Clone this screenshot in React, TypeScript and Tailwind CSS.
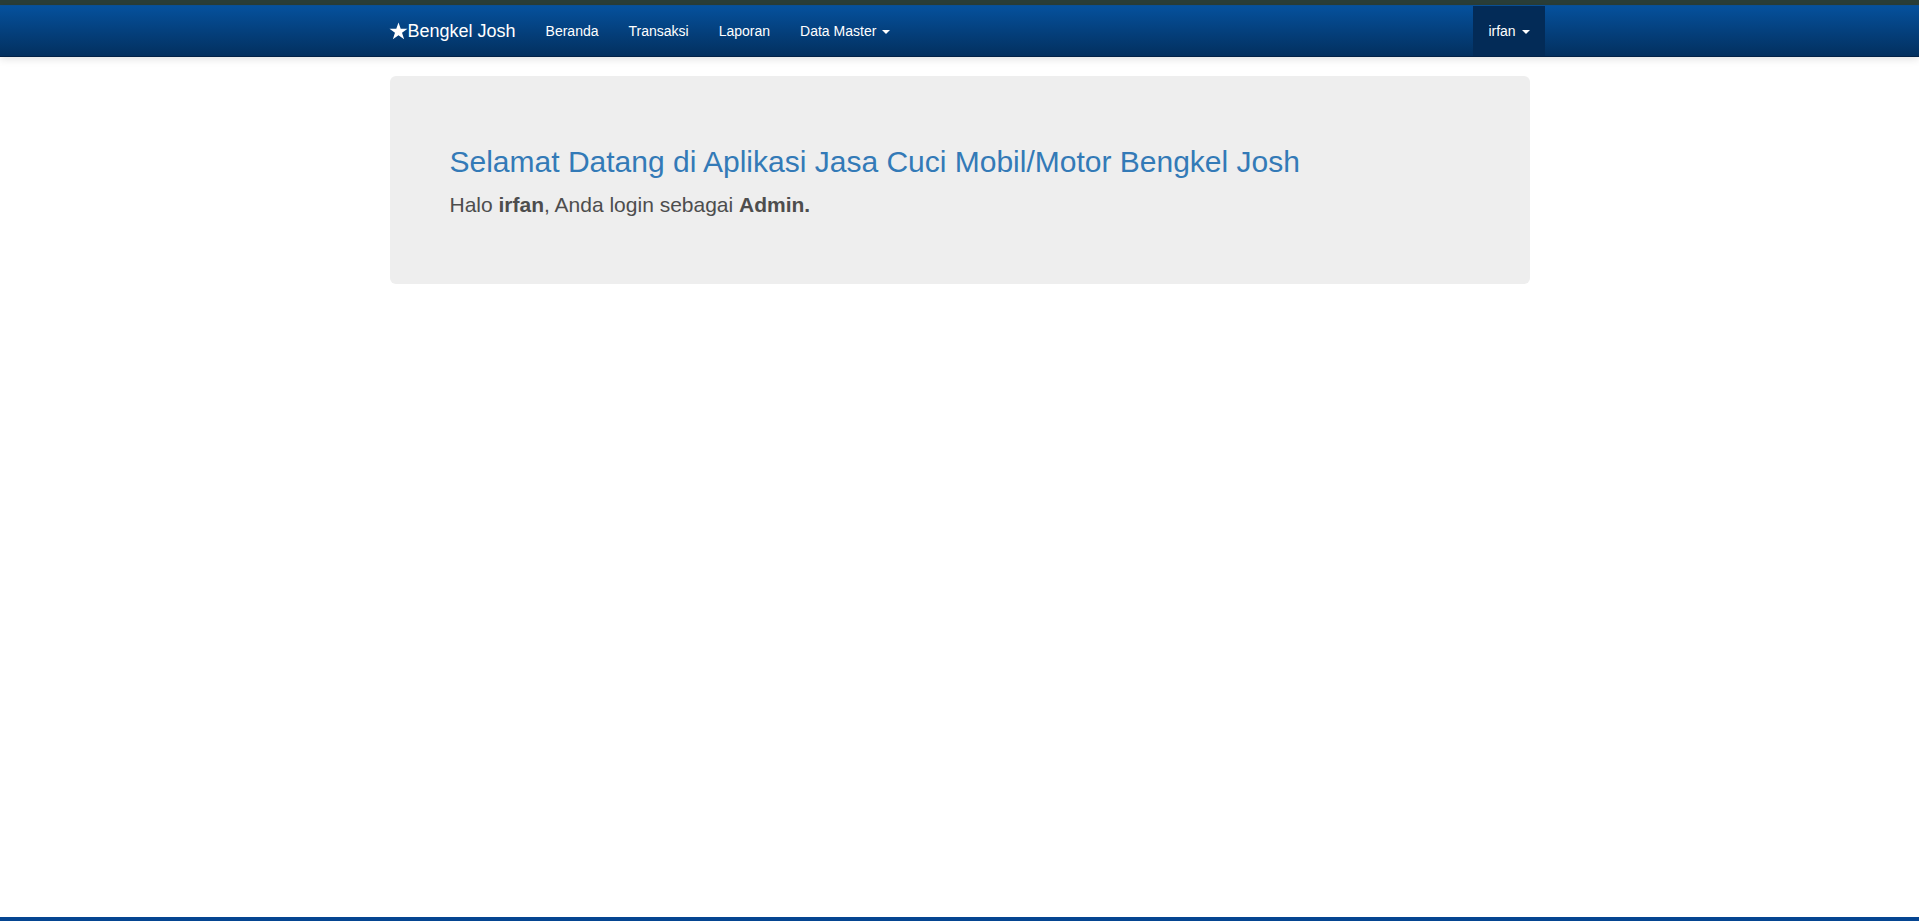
import React from "react";

function Caret() {
  return (
    <span className="inline-block w-0 h-0 ml-[2px] align-middle border-t-[4px] border-t-white border-x-[4px] border-x-transparent" />
  );
}

function Star() {
  return (
    <svg width="19" height="18" viewBox="0 0 24 23" className="inline-block" aria-hidden="true">
      <path d="M12 0.5l2.83 8.2H23.5l-7 5.1 2.7 8.3L12 16.9l-7.2 5.2 2.7-8.3-7-5.1h8.67z" fill="#ffffff" />
    </svg>
  );
}

export default function App() {
  const links = ["Beranda", "Transaksi", "Laporan"];
  return (
    <div className="min-h-[921px] bg-white flex flex-col" style={{ fontFamily: '"Liberation Sans", Arial, sans-serif' }}>
      <div className="h-[5px] bg-[#2a3e38]" />
      <nav className="h-[52px] border-t border-t-[#0a4f93] border-b border-b-[#022247] bg-gradient-to-b from-[#05519d] to-[#03305f] shadow-[0_2px_8px_rgba(0,0,0,0.12)]">
        <div className="w-[1170px] mx-auto px-[15px] flex h-[50px] text-white">
          <a className="-ml-[15px] pl-[14px] pr-[15px] flex items-center text-[18px] leading-[20px] h-[50px]">
            <Star />
            <span>Bengkel Josh</span>
          </a>
          <ul className="flex">
            {links.map((l) => (
              <li key={l}>
                <a className="block px-[15px] py-[15px] text-[14px] leading-[20px]">{l}</a>
              </li>
            ))}
            <li>
              <a className="block px-[15px] py-[15px] text-[14px] leading-[20px]">
                Data Master <Caret />
              </a>
            </li>
          </ul>
          <ul className="flex ml-auto -mr-[15px]">
            <li className="bg-[#032b57]">
              <a className="block px-[15px] py-[15px] text-[14px] leading-[20px]">
                irfan <Caret />
              </a>
            </li>
          </ul>
        </div>
      </nav>
      <main className="flex-1">
        <div className="w-[1170px] mx-auto px-[15px] mt-[19px]">
          <div className="bg-[#eeeeee] rounded-[6px] px-[60px] pt-[48px] pb-[50px]">
            <h2 className="mt-[21px] mb-[12px] text-[30px] leading-[33px] text-[#337ab7] font-normal">
              Selamat Datang di Aplikasi Jasa Cuci Mobil/Motor Bengkel Josh
            </h2>
            <p className="mb-[15px] text-[21px] leading-[29.4px] text-[#4d4d4d]">
              Halo <b>irfan</b>, Anda login sebagai <b>Admin.</b>
            </p>
          </div>
        </div>
      </main>
      <div className="h-[4px] bg-[#054591]" />
    </div>
  );
}
